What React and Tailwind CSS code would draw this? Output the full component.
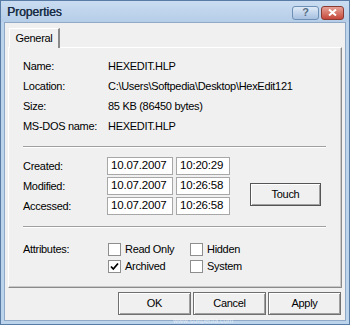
import React from 'react';

const font = { fontFamily: '"Liberation Sans", Arial, sans-serif' };

const info = [
  ['Name:', 'HEXEDIT.HLP'],
  ['Location:', 'C:\\Users\\Softpedia\\Desktop\\HexEdit121'],
  ['Size:', '85 KB (86450 bytes)'],
  ['MS-DOS name:', 'HEXEDIT.HLP'],
];

const times = [
  ['Created:', '10.07.2007', '10:20:29'],
  ['Modified:', '10.07.2007', '10:26:58'],
  ['Accessed:', '10.07.2007', '10:26:58'],
];

const Separator = ({ className }) => (
  <div className={`h-[2px] border-t border-[#a0a0a0] border-b border-b-white ${className}`} />
);

const Box = ({ children, w }) => (
  <div className={`${w} h-[18px] bg-white border border-[#a7a7a7] flex items-center pl-[3px] text-[11.5px] tracking-[-0.2px] leading-none`}>
    {children}
  </div>
);

const Check = ({ checked, label }) => (
  <div className="flex items-center gap-[4px] h-[17px]">
    <div className="w-[13px] h-[13px] bg-white border border-[#8e8e8e] flex items-center justify-center">
      {checked && (
        <svg width="9" height="9" viewBox="0 0 9 9">
          <path d="M1 4.5 L3.3 7 L8 1.5" stroke="#000" strokeWidth="1.8" fill="none" />
        </svg>
      )}
    </div>
    <span>{label}</span>
  </div>
);

const Button = ({ children, w, bold }) => (
  <button
    className={`${w} h-[23px] bg-[#f0f0f0] border ${bold ? 'border-[#555]' : 'border-[#707070]'} shadow-[inset_1px_1px_0_#fff,inset_-1px_-1px_0_#a0a0a0] flex items-center justify-center`}
  >
    {children}
  </button>
);

export default function App() {
  return (
    <div className="w-[350px] h-[325px] bg-[#bcd3ec] border border-[#587ca5] flex flex-col text-black text-[11px] tracking-[-0.3px] relative overflow-hidden" style={font}>
      {/* title bar */}
      <div className="h-[21px] flex items-center pl-[6px] pr-[5px] bg-gradient-to-b from-[#c9dcf1] to-[#b6cde8]">
        <span className="text-[12px] text-[#1a2d45] tracking-[0px] [text-shadow:0.4px_0_0_#1a2d45]">Properties</span>
        <div className="ml-auto flex gap-[2px] mt-[2px]">
          <div className="w-[27px] h-[14px] rounded-[3px] border border-[#6e8fb6] bg-gradient-to-b from-[#dfeaf7] to-[#a6c0df] flex items-center justify-center text-[11px] font-bold text-[#5a6f86] leading-none">
            ?
          </div>
          <div className="w-[23px] h-[14px] rounded-[3px] border border-[#8a3a32] bg-gradient-to-b from-[#e6a197] to-[#c4463a] flex items-center justify-center">
            <svg width="9" height="7" viewBox="0 0 9 7">
              <path d="M1 0.5 L8 6.5 M8 0.5 L1 6.5" stroke="#fff" strokeWidth="2" />
            </svg>
          </div>
        </div>
      </div>

      {/* body */}
      <div className="flex-1 mx-[3px] mb-[3px] bg-[#f0f0f0] border border-[#8fa9c7] pl-[3px] pr-[4px] pt-[5px] flex flex-col">
        {/* tab */}
        <div className="ml-[1px] w-[51px] h-[20px] bg-[#f0f0f0] border-t border-l border-white border-r-2 border-r-[#8a8a8a] relative z-10 -mb-[1px] flex items-center justify-center">
          General
        </div>

        {/* panel */}
        <div className="h-[241px] w-[334px] border border-t-white border-l-white border-r-[#8a8a8a] border-b-[#8a8a8a] shadow-[inset_-1px_-1px_0_#c8c8c8] px-[14px] pt-[8px]">
          <div className="flex flex-col">
            {info.map(([k, v]) => (
              <div key={k} className="flex h-[20px] items-center">
                <span className="w-[85px]">{k}</span>
                <span>{v}</span>
              </div>
            ))}
          </div>

          <Separator className="mt-[10px] w-[303px]" />

          <div className="flex mt-[9px]">
            <div className="flex flex-col gap-[2px]">
              {times.map(([k, d, t]) => (
                <div key={k} className="flex items-center h-[18px]">
                  <span className="w-[84px]">{k}</span>
                  <Box w="w-[66px]">{d}</Box>
                  <div className="w-[3px]" />
                  <Box w="w-[54px]">{t}</Box>
                </div>
              ))}
            </div>
            <div className="ml-[20px] mt-[26px]">
              <Button w="w-[71px]" bold>Touch</Button>
            </div>
          </div>

          <Separator className="mt-[11px] w-[303px]" />

          <div className="flex mt-[13px]">
            <span className="w-[85px] h-[17px] flex items-center">Attributes:</span>
            <div className="flex flex-col w-[82px]">
              <Check label="Read Only" />
              <Check checked label="Archived" />
            </div>
            <div className="flex flex-col">
              <Check label="Hidden" />
              <Check label="System" />
            </div>
          </div>
        </div>

        {/* buttons */}
        <div className="flex justify-end gap-[2px] mt-[4px]">
          <Button w="w-[73px]">OK</Button>
          <Button w="w-[73px]">Cancel</Button>
          <Button w="w-[73px]">Apply</Button>
        </div>
      </div>

      {/* watermark */}
      <div className="absolute left-[172px] top-[316px] text-[7px] leading-none tracking-[0px] text-white/60 pointer-events-none">
        www.softpedia.com
      </div>
    </div>
  );
}
